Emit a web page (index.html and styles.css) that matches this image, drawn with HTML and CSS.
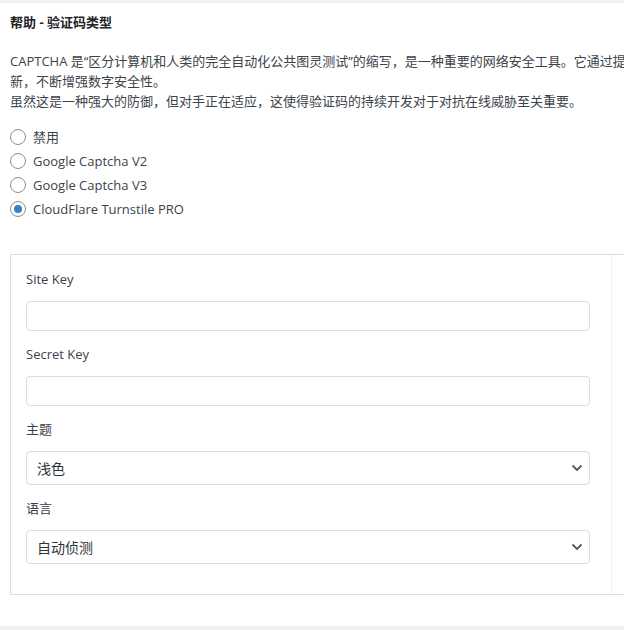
FILE: index.html
```html
<!DOCTYPE html>
<html lang="zh-CN">
<head>
<meta charset="utf-8">
<title>帮助 - 验证码类型</title>
<link rel="stylesheet" href="styles.css">
</head>
<body>
<section class="panel">
  <h2 class="title">帮助 - 验证码类型</h2>
  <p class="intro">CAPTCHA 是“区分计算机和人类的完全自动化公共图灵测试”的缩写，是一种重要的网络安全工具。它通过提出人类容易通过而机器难以破解的挑战来保护网站，并随着技术发展持续更<br>新，不断增强数字安全性。<br>虽然这是一种强大的防御，但对手正在适应，这使得验证码的持续开发对于对抗在线威胁至关重要。</p>
  <div class="options">
    <label class="option"><input type="radio" name="captcha" class="radio">禁用</label>
    <label class="option"><input type="radio" name="captcha" class="radio">Google Captcha V2</label>
    <label class="option"><input type="radio" name="captcha" class="radio">Google Captcha V3</label>
    <label class="option"><input type="radio" name="captcha" class="radio" checked>CloudFlare Turnstile PRO</label>
  </div>
  <div class="card">
    <div class="card-main">
      <div class="field">
        <label class="field-label" for="site-key">Site Key</label>
        <input class="text-input" id="site-key" type="text">
      </div>
      <div class="field">
        <label class="field-label" for="secret-key">Secret Key</label>
        <input class="text-input" id="secret-key" type="text">
      </div>
      <div class="field">
        <label class="field-label" for="theme">主题</label>
        <div class="select-wrap">
          <select class="select" id="theme">
            <option>浅色</option>
            <option>深色</option>
          </select>
          <svg class="chevron" width="12" height="8" viewBox="0 0 12 8"><path d="M1.5 1.5 L6 6 L10.5 1.5" fill="none" stroke="#50575e" stroke-width="1.8"/></svg>
        </div>
      </div>
      <div class="field">
        <label class="field-label" for="lang">语言</label>
        <div class="select-wrap">
          <select class="select" id="lang">
            <option>自动侦测</option>
          </select>
          <svg class="chevron" width="12" height="8" viewBox="0 0 12 8"><path d="M1.5 1.5 L6 6 L10.5 1.5" fill="none" stroke="#50575e" stroke-width="1.8"/></svg>
        </div>
      </div>
    </div>
    <div class="card-side"></div>
  </div>
</section>
</body>
</html>
```
FILE: styles.css
```css
html {
  background: #f0f0f1;
}
body {
  margin: 0;
  height: 630px;
  overflow: hidden;
  font-family: "Open Sans", "Noto Sans CJK SC", sans-serif;
  font-size: 13px;
  line-height: 20px;
  color: #3c434a;
}
.panel {
  margin-top: 3px;
  height: 623px;
  width: 1000px;
  box-sizing: border-box;
  padding-left: 10px;
  background: #fff;
}
.title {
  margin: 0;
  padding-top: 9px;
  font-size: 13px;
  line-height: 20px;
  font-weight: 700;
  color: #1d2327;
}
.intro {
  margin: 19px 0 0;
  white-space: nowrap;
}
.options {
  margin-top: 14px;
  display: flex;
  flex-direction: column;
}
.option {
  display: flex;
  align-items: center;
  height: 24px;
  gap: 7px;
}
.radio {
  appearance: none;
  -webkit-appearance: none;
  margin: 0;
  width: 16px;
  height: 16px;
  box-sizing: border-box;
  border: 1px solid #8c8f94;
  border-radius: 50%;
  background: #fff;
  display: flex;
  align-items: center;
  justify-content: center;
}
.radio:checked::before {
  content: "";
  width: 8px;
  height: 8px;
  border-radius: 50%;
  background: #3582c4;
}
.card {
  margin-top: 33px;
  display: flex;
  border: 1px solid #dcdcde;
  width: max-content;
}
.card-main {
  width: 600px;
  box-sizing: border-box;
  padding: 14px 21px 30px 15px;
  display: flex;
  flex-direction: column;
  gap: 13px;
}
.card-side {
  width: 300px;
  border-left: 1px solid #f0f0f1;
}
.field {
  display: flex;
  flex-direction: column;
  gap: 12px;
}
.field-label {
  display: block;
  line-height: 20px;
}
.text-input {
  height: 30px;
  box-sizing: border-box;
  border: 1px solid #dcdcde;
  border-radius: 4px;
  margin: 0;
  padding: 0 8px;
  background: #fff;
  font: inherit;
}
.select-wrap {
  position: relative;
}
.select {
  appearance: none;
  -webkit-appearance: none;
  width: 100%;
  height: 34px;
  box-sizing: border-box;
  border: 1px solid #dcdcde;
  border-radius: 4px;
  margin: 0;
  padding: 0 30px 0 10px;
  background: #fff;
  font-family: "Open Sans", "Noto Sans CJK SC", sans-serif;
  font-size: 14px;
  color: #2c3338;
}
.chevron {
  position: absolute;
  right: 7px;
  top: 13px;
  pointer-events: none;
}
```
